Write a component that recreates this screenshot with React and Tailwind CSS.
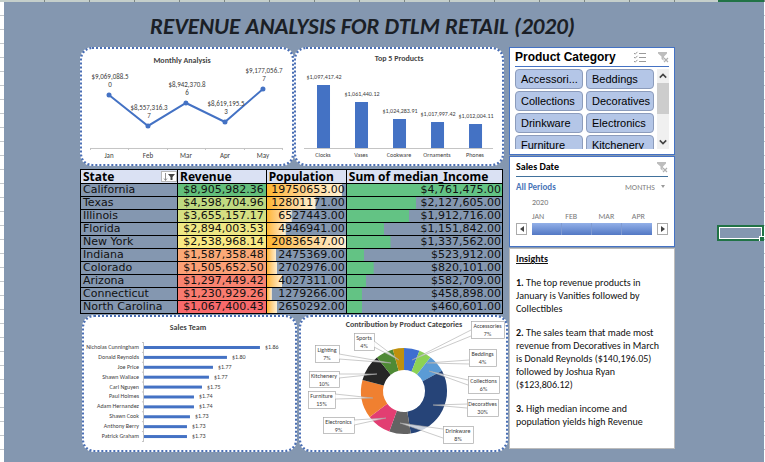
import React from "react";

const months = [
  { name: "Jan", x: 109, y: 95, label: ["$9,069,088.5", "0"] },
  { name: "Feb", x: 148, y: 126, label: ["$8,557,316.3", "7"] },
  { name: "Mar", x: 186, y: 103, label: ["$8,942,370.8", "6"] },
  { name: "Apr", x: 225, y: 122, label: ["$8,619,195.5", "3"] },
  { name: "May", x: 263, y: 89, label: ["$9,177,056.7", "7"] },
];

const products = [
  { name: "Clocks", x: 323, top: 85, label: "$1,097,417.42" },
  { name: "Vases", x: 361, top: 102, label: "$1,061,440.12" },
  { name: "Cookware", x: 399, top: 119, label: "$1,024,283.91" },
  { name: "Ornaments", x: 437, top: 122, label: "$1,017,997.42" },
  { name: "Phones", x: 475, top: 124, label: "$1,012,004.11" },
];

const team = [
  { name: "Nicholas Cunningham", end: 260, label: "$1.86" },
  { name: "Donald Reynolds", end: 227, label: "$1.80" },
  { name: "Joe Price", end: 213, label: "$1.77" },
  { name: "Shawn Wallace", end: 209, label: "$1.77" },
  { name: "Carl Nguyen", end: 202, label: "$1.75" },
  { name: "Paul Holmes", end: 194, label: "$1.74" },
  { name: "Adam Hernandez", end: 194, label: "$1.74" },
  { name: "Shawn Cook", end: 190, label: "$1.73" },
  { name: "Anthony Berry", end: 187, label: "$1.73" },
  { name: "Patrick Graham", end: 187, label: "$1.73" },
];

const slices = [
  { name: "Accessories", pct: "7%", from: 0, to: 21, color: "#3f6fd0", box: [471, 322, 33, 17], tip: [412, 361], edge: [331, 337] },
  { name: "Beddings", pct: "4%", from: 21, to: 38, color: "#8cd255", box: [469, 350, 27, 17], tip: [427, 364], edge: [361, 365] },
  { name: "Collections", pct: "6%", from: 38, to: 62, color: "#5b9bd5", box: [468, 377, 31, 17], tip: [429, 372], edge: [381, 386] },
  { name: "Decoratives", pct: "30%", from: 62, to: 171, color: "#264478", box: [467, 400, 31, 17], tip: [433, 406], edge: [405, 409] },
  { name: "Drinkware", pct: "8%", from: 171, to: 200, color: "#636363", box: [443, 427, 30, 17], tip: [400, 424], edge: [430, 439] },
  { name: "Electronics", pct: "9%", from: 200, to: 233, color: "#e23e72", box: [323, 418, 31, 16], tip: [386, 419], edge: [421, 426] },
  { name: "Furniture", pct: "15%", from: 233, to: 285, color: "#f08030", box: [308, 392, 27, 17], tip: [373, 399], edge: [395, 400] },
  { name: "Kitchenery", pct: "10%", from: 285, to: 321, color: "#262626", box: [309, 372, 30, 16], tip: [377, 375], edge: [375, 379] },
  { name: "Lighting", pct: "7%", from: 321, to: 345, color: "#4f8a35", box: [315, 346, 24, 17], tip: [391, 364], edge: [355, 360] },
  { name: "Sports", pct: "4%", from: 345, to: 360, color: "#bf900e", box: [354, 334, 20, 17], tip: [399, 361], edge: [342, 348] },
];

const states = [
  { state: "California", revenue: "$8,905,982.36", tone: "bg-[#63be7b]", population: 19750653, income: 4761475 },
  { state: "Texas", revenue: "$4,598,704.96", tone: "bg-[#bfd981]", population: 12801171, income: 2127605 },
  { state: "Illinois", revenue: "$3,655,157.17", tone: "bg-[#d6e082]", population: 6527443, income: 1912716 },
  { state: "Florida", revenue: "$2,894,003.53", tone: "bg-[#efe784]", population: 4946941, income: 1151842 },
  { state: "New York", revenue: "$2,538,968.14", tone: "bg-[#fbe983]", population: 20836547, income: 1337562 },
  { state: "Indiana", revenue: "$1,587,358.48", tone: "bg-[#fba977]", population: 2475369, income: 523912 },
  { state: "Colorado", revenue: "$1,505,652.50", tone: "bg-[#fba076]", population: 2702976, income: 820101 },
  { state: "Arizona", revenue: "$1,297,449.42", tone: "bg-[#f98370]", population: 4027311, income: 582709 },
  { state: "Connecticut", revenue: "$1,230,929.26", tone: "bg-[#f97b6f]", population: 1279266, income: 458898 },
  { state: "North Carolina", revenue: "$1,067,400.43", tone: "bg-[#f8696b]", population: 2650292, income: 460601 },
];

const categories = ["Accessori...", "Beddings", "Collections", "Decoratives", "Drinkware", "Electronics", "Furniture", "Kitchenery"];

const panel = "min-w-0 overflow-hidden rounded-xl border-2 border-dotted border-[#4a6fb5] bg-white";

function polar(r, deg) {
  const a = (deg * Math.PI) / 180;
  return `${(404 + r * Math.sin(a)).toFixed(2)} ${(392 - r * Math.cos(a)).toFixed(2)}`;
}

function ring(from, to) {
  const large = to - from > 180 ? 1 : 0;
  return `M${polar(43, from)}A43 43 0 ${large} 1 ${polar(43, to)}L${polar(21, to)}A21 21 0 ${large} 0 ${polar(21, from)}Z`;
}

function MonthlyChart() {
  return (
    <svg viewBox="82 49 210 115" className="block h-auto w-full" role="img" aria-label="Monthly Analysis">
      <text x="182" y="63" textAnchor="middle" fill="#444" className="text-[8px] font-bold">Monthly Analysis</text>
      <path d="M90 148.500H283M90.500 148v2M128.500 148v2M167.500 148v2M205.500 148v2M244.500 148v2M282.500 148v2" stroke="#c4c4c4" fill="none" />
      <polyline points={months.map((m) => `${m.x},${m.y}`).join(" ")} fill="none" stroke="#4472c4" strokeWidth="2" />
      {months.map((m) => (
        <g key={m.name} fill="#404040" textAnchor="middle" className="text-[7px]">
          <circle cx={m.x} cy={m.y} r="2.500" fill="#4472c4" />
          <text x={m.x + 1} y={m.y - 16}>{m.label[0]}</text>
          <text x={m.x + 1} y={m.y - 8}>{m.label[1]}</text>
          <text x={m.x} y="158">{m.name}</text>
        </g>
      ))}
    </svg>
  );
}

function ProductsChart() {
  return (
    <svg viewBox="296 49 206 115" className="block h-auto w-full" role="img" aria-label="Top 5 Products">
      <text x="399" y="61" textAnchor="middle" fill="#444" className="text-[8px] font-bold">Top 5 Products</text>
      {products.map((p) => (
        <g key={p.name} fill="#404040" textAnchor="middle" className="text-[6px]">
          <rect x={p.x - 6} y={p.top} width="13" height={148 - p.top} fill="#4472c4" />
          <text x={p.x + 1} y={p.top - 6}>{p.label}</text>
          <text x={p.x} y="157">{p.name}</text>
        </g>
      ))}
      <path d="M304 148.500H493" stroke="#c4c4c4" />
    </svg>
  );
}

function TeamChart() {
  return (
    <svg viewBox="84 318 211 133" className="block h-auto w-full" role="img" aria-label="Sales Team">
      <text x="188" y="331" textAnchor="middle" fill="#444" className="text-[8px] font-bold">Sales Team</text>
      {team.map((t, i) => (
        <g key={t.name} fill="#404040" className="text-[6px]">
          <text x="139" y={350 + i * 9.9} textAnchor="end">{t.name}</text>
          <rect x="144" y={347 + i * 9.9} width={t.end - 144} height="3" fill="#4472c4" />
          <text x={t.end + 5} y={350 + i * 9.9}>{t.label}</text>
          <path d={`M142 ${343.5 + i * 9.9}h2`} stroke="#c4c4c4" />
        </g>
      ))}
      <path d="M143.500 343V443M142 442.500h2" stroke="#c4c4c4" />
    </svg>
  );
}

function CategoryChart() {
  return (
    <svg viewBox="301 318 205 133" className="block h-auto w-full" role="img" aria-label="Contribution by Product Categories">
      {slices.map((s) => (
        <path key={s.name} d={ring(s.from, s.to)} fill={s.color} />
      ))}
      {slices.map((s) => {
        const [x, y, w, h] = s.box;
        const side = x > 404 ? x : x + w;
        return (
          <g key={s.name}>
            <rect x={x + 0.5} y={y + 0.5} width={w} height={h} fill="#fff" stroke="#a8a8a8" strokeWidth="0.7" />
            <path d={`M${side} ${s.edge[0]}L${s.tip[0]} ${s.tip[1]}L${side} ${s.edge[1]}`} fill="#fff" fillOpacity="0.75" stroke="#a8a8a8" strokeWidth="0.6" />
            <text x={x + w / 2} y={y + 7} textAnchor="middle" fill="#404040" className="text-[6px]">{s.name}</text>
            <text x={x + w / 2} y={y + 15} textAnchor="middle" fill="#404040" className="text-[6px]">{s.pct}</text>
          </g>
        );
      })}
      <text x="404" y="328" textAnchor="middle" fill="#444" className="text-[8px] font-bold">Contribution by Product Categories</text>
    </svg>
  );
}

function ClearFilterIcon() {
  return (
    <svg viewBox="0 0 12 12" className="size-3" aria-hidden="true">
      <path d="M1 1h9v1.500L7 5.500V10L4.500 8V5.500L1 2.500z" fill="#bdbdbd" />
      <path d="M7 7l4 4M11 7l-4 4" stroke="#fff" strokeWidth="2.500" />
      <path d="M7 7l4 4M11 7l-4 4" stroke="#b0b0b0" strokeWidth="1.200" />
    </svg>
  );
}

function MultiSelectIcon() {
  return (
    <svg viewBox="0 0 14 12" className="h-3 w-3.5" fill="none" stroke="#9a9a9a" aria-hidden="true">
      <path d="M1 2l1.200 1.200L4.500.800M1 6l1.200 1.200 2.300-2.400M1 10l1.200 1.200 2.300-2.400" />
      <path d="M6 2.500h7M6 6.500h7M6 10.500h7" />
    </svg>
  );
}

function StateTable() {
  return (
    <table className="w-full table-fixed border-collapse border border-black font-['DejaVu_Sans',sans-serif] text-[11px] leading-[12px] text-[#111]">
      <colgroup>
        <col className="w-[23%]" />
        <col className="w-[21%]" />
        <col className="w-[19%]" />
        <col className="w-[37%]" />
      </colgroup>
      <thead>
        <tr className="h-[14px] bg-[#dae1f3] text-left font-['Noto_Sans','Open_Sans',sans-serif] text-[12px] text-black">
          <th className="border border-black p-0 pl-0.5">
            <div className="flex items-center justify-between">
              State
              <button type="button" aria-label="Filter State" className="flex h-[11px] w-4 items-center justify-center border border-[#b8b8b8] bg-white">
                <svg viewBox="0 0 12 8" className="h-2 w-3" aria-hidden="true">
                  <path d="M2.500 0v7M1 5.500l1.500 2L4 5.500" stroke="#777" strokeWidth="0.800" fill="none" />
                  <path d="M5 1h7L9.500 4v3h-2V4z" fill="#444" />
                </svg>
              </button>
            </div>
          </th>
          <th className="border border-black p-0 pl-0.5">Revenue</th>
          <th className="border border-black p-0 pl-0.5">Population</th>
          <th className="border border-black p-0 pl-0.5 whitespace-nowrap">Sum of median_Income</th>
        </tr>
      </thead>
      <tbody>
        {states.map((s) => (
          <tr key={s.state} className="h-[13px]">
            <td className="border border-black p-0 pl-0.5 whitespace-nowrap">{s.state}</td>
            <td className={`border border-black p-0 pr-0.5 text-right ${s.tone}`}>{s.revenue}</td>
            <td
              className="border border-black bg-linear-to-r from-[#ffb52b] to-[#fff0d2] bg-no-repeat p-0 pr-px text-right"
              style={{ backgroundSize: `${(s.population / 20836547) * 100}% 100%` }}
            >
              {s.population}.00
            </td>
            <td
              className="border border-black bg-linear-to-r from-[#63c384] to-[#63c384] bg-no-repeat p-0 pr-px text-right"
              style={{ backgroundSize: `${(s.income / 4761475) * 100}% 100%` }}
            >
              ${s.income.toLocaleString("en-US")}.00
            </td>
          </tr>
        ))}
      </tbody>
    </table>
  );
}

function ProductSlicer() {
  return (
    <section className="border border-[#4472c4] bg-white px-[5px] pb-[5px] font-['Liberation_Sans',Arial,sans-serif] text-black">
      <header className="flex h-[19px] items-center border-b border-[#4472c4]">
        <h2 className="flex-1 text-[12px] font-bold whitespace-nowrap">Product Category</h2>
        <button type="button" aria-label="Multi-select" className="mr-2.5"><MultiSelectIcon /></button>
        <button type="button" aria-label="Clear category filter"><ClearFilterIcon /></button>
      </header>
      <div className="mt-[2px] flex h-20 gap-[3px]">
        <div className="grid min-w-0 flex-1 grid-cols-2 content-start gap-x-[3px] gap-y-[2px] overflow-hidden">
          {categories.map((c) => (
            <button key={c} type="button" className="h-5 overflow-hidden rounded-sm border border-[#8c9cbc] bg-[#b4c6e7] pl-[5px] text-left text-[11px] whitespace-nowrap">
              {c}
            </button>
          ))}
        </div>
        <div className="flex w-3 flex-col bg-[#f0f0f0]">
          <button type="button" aria-label="Scroll up" className="flex h-[14px] items-center justify-center">
            <svg viewBox="0 0 10 6" className="h-1.5 w-2" aria-hidden="true"><path d="M1 5l4-4 4 4" fill="none" stroke="#444" strokeWidth="2" /></svg>
          </button>
          <div className="h-[31px] bg-[#cdcdcd]" />
          <div className="flex-1" />
          <button type="button" aria-label="Scroll down" className="flex h-[14px] items-center justify-center">
            <svg viewBox="0 0 10 6" className="h-1.5 w-2" aria-hidden="true"><path d="M1 1l4 4 4-4" fill="none" stroke="#444" strokeWidth="2" /></svg>
          </button>
        </div>
      </div>
    </section>
  );
}

function DateTimeline() {
  return (
    <section className="h-[91px] border border-[#4472c4] bg-white px-[6px]">
      <header className="flex h-[20px] items-center border-b border-[#41719c]">
        <h2 className="flex-1 text-[10px] font-bold text-black">Sales Date</h2>
        <button type="button" aria-label="Clear date filter"><ClearFilterIcon /></button>
      </header>
      <div className="flex h-[19px] items-center justify-between">
        <span className="text-[9px] font-bold text-[#4a76b8]">All Periods</span>
        <div className="flex items-center gap-1.5">
          <select aria-label="Time level" className="appearance-none text-[8px] text-[#808080]">
            <option>MONTHS</option>
          </select>
          <span className="mr-[3px] size-0 border-x-2 border-t-3 border-x-transparent border-t-[#9a9a9a]" />
        </div>
      </div>
      <div className="ml-4 h-[13px] text-[8px] leading-[12px] text-[#7a7a7a]">2020</div>
      <div className="ml-4 grid h-[14px] grid-cols-4 pr-[3px] text-[8px] leading-[14px] text-[#7a7a7a]">
        {["JAN", "FEB", "MAR", "APR"].map((m) => <span key={m}>{m}</span>)}
      </div>
      <div className="flex h-3 items-stretch gap-[5px]">
        <button type="button" aria-label="Earlier" className="flex w-[11px] items-center justify-center border border-[#ababab] bg-white">
          <span className="size-0 border-y-3 border-r-4 border-y-transparent border-r-[#444]" />
        </button>
        <div className="grid flex-1 grid-cols-4 divide-x divide-[#7f9bd2] bg-linear-to-b from-[#93b0e8] to-[#5378c4]">
          <span /><span /><span /><span />
        </div>
        <button type="button" aria-label="Later" className="flex w-[11px] items-center justify-center border border-[#ababab] bg-white">
          <span className="size-0 border-y-3 border-l-4 border-y-transparent border-l-[#444]" />
        </button>
      </div>
    </section>
  );
}

function Insights() {
  return (
    <section className="flex flex-1 flex-col gap-[11px] border border-[#bcbcbc] bg-white pt-[3px] pr-[11px] pl-[6px] text-[10px] leading-[13px] text-[#111]">
      <h2 className="font-bold underline">Insights</h2>
      <p><b>1.</b> The top revenue products in January is Vanities followed by Collectibles</p>
      <p><b>2.</b> The sales team that made most revenue from Decoratives in March is Donald Reynolds ($140,196.05) followed by Joshua Ryan ($123,806.12)</p>
      <p><b>3.</b> High median income and population yields high Revenue</p>
    </section>
  );
}

export default function App() {
  return (
    <div className="flex min-h-screen flex-col bg-[#8497b0] font-[Carlito,Lato,sans-serif]">
      <div className="flex h-[2px] bg-[repeating-linear-gradient(to_right,#c5cfcb_0px,#c5cfcb_44px,#7d8783_44px,#7d8783_45px)]">
        <div className="flex-1" />
        <div className="mr-px w-[46px] bg-[#217346]" />
      </div>
      <div className="flex flex-1">
        <div className="w-1 shrink-0 bg-[repeating-linear-gradient(to_bottom,#fff_0px,#fff_13px,#c4c8cc_13px,#c4c8cc_14px)]" />
        <main className="min-w-0 flex-1 pl-[76px]">
          <h1 className="flex h-[45px] items-center pt-1 pl-[70px] text-[23px] font-bold whitespace-nowrap text-[#1b1f26] italic">
            REVENUE ANALYSIS FOR DTLM RETAIL (2020)
          </h1>
          <div className="grid grid-cols-[minmax(0,428fr)_minmax(0,166fr)] gap-px">
            <div className="flex flex-col">
              <div className="flex pr-1">
                <div className={`${panel} flex-[214]`}><MonthlyChart /></div>
                <div className={`${panel} flex-[210]`}><ProductsChart /></div>
              </div>
              <div className="mt-[3px] pr-[5px]"><StateTable /></div>
              <div className="mt-px flex gap-[2px] pl-[2px]">
                <div className={`${panel} flex-[215]`}><TeamChart /></div>
                <div className={`${panel} flex-[209]`}><CategoryChart /></div>
              </div>
            </div>
            <div className="mb-[3px] flex flex-col gap-px">
              <ProductSlicer />
              <DateTimeline />
              <Insights />
            </div>
          </div>
        </main>
        <aside className="flex w-[89px] shrink-0 flex-col items-end pt-[223px]">
          <div className="flex h-4 w-[47px] items-end justify-end border-2 border-[#217346] outline -outline-offset-3 outline-white">
            <span className="z-10 -mr-[2px] -mb-[2px] size-[5px] border-t border-l border-white bg-[#217346]" />
          </div>
        </aside>
        <div className="w-px shrink-0 bg-[repeating-linear-gradient(to_bottom,#fff_0px,#fff_13px,#c4c8cc_13px,#c4c8cc_14px)]" />
      </div>
    </div>
  );
}
